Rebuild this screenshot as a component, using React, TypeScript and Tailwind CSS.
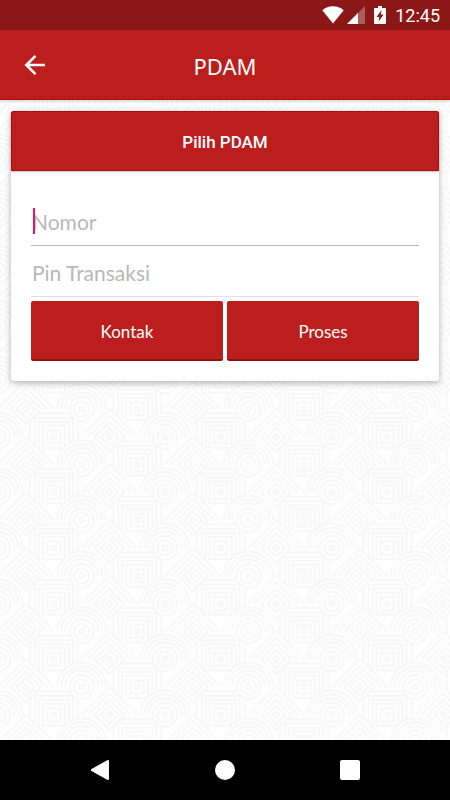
import React from "react";

const PERIOD_X = 166.8;
const PERIOD_Y = 55.6;
const STEP = 27.8;

type Kind = "diamond" | "circle" | "square";
type Motif = { kind: Kind; x: number; y: number; id: string };

const ROWS: Kind[][] = [
  ["diamond", "circle", "square"],
  ["square", "diamond", "circle"],
];

const MOTIFS: Motif[] = [-2, -1, 0, 1, 2, 3].flatMap((row) => {
  const odd = Math.abs(row % 2);
  return [-3, -2, -1, 0, 1, 2, 3, 4].map((slot) => ({
    kind: ROWS[odd][(slot + 3) % 3],
    x: (slot * 2 + odd) * STEP,
    y: row * STEP,
    id: `${row}:${slot}`,
  }));
});

function Outer({ kind, x, y }: Motif) {
  return (
    <g transform={`translate(${x} ${y})`}>
      {kind === "diamond" &&
        [28, 21.5].map((r) => <path key={r} d={`M${-r} 0L0 ${-r}L${r} 0`} />)}
      {kind === "circle" &&
        [24.5, 20.5, 16.5].map((r) => <path key={r} d={`M${-r} 0A${r} ${r} 0 0 1 ${r} 0`} />)}
      {kind === "square" && (
        <>
          <path d="M-24 16V-23.500H24V16" />
          <path d="M-19 16V-19H19V16" />
          <path d="M-15 16V-15H15V16" />
        </>
      )}
    </g>
  );
}

function Inner({ kind, x, y }: Motif) {
  return (
    <g transform={`translate(${x} ${y})`}>
      {kind === "diamond" &&
        [15, 9, 3].map((r) => <path key={r} d={`M0 ${-r}L${r} 0L0 ${r}L${-r} 0Z`} />)}
      {kind === "circle" && [12, 7.5, 2.5].map((r) => <circle key={r} r={r} />)}
      {kind === "square" &&
        [11, 6.5, 2].map((r) => <rect key={r} x={-r} y={-r} width={r * 2} height={r * 2} />)}
    </g>
  );
}

function Backdrop() {
  return (
    <svg className="absolute inset-0 h-full w-full" aria-hidden="true">
      <defs>
        <pattern id="motifs" x="26" y="31" width={PERIOD_X} height={PERIOD_Y} patternUnits="userSpaceOnUse">
          <g fill="#fefefe" stroke="#f6f6f6" strokeWidth="1.600">
            {MOTIFS.map((motif) => (
              <Outer key={motif.id} {...motif} />
            ))}
            {MOTIFS.map((motif) => (
              <Inner key={motif.id} {...motif} />
            ))}
          </g>
        </pattern>
      </defs>
      <rect width="100%" height="100%" fill="url(#motifs)" />
    </svg>
  );
}

function StatusBar() {
  return (
    <div className="flex h-[30px] items-center justify-end bg-[#8c1717] pr-[10px] text-white">
      <svg width="22" height="18" viewBox="0 0 22 18" fill="currentColor" aria-hidden="true">
        <path d="M11 17.5L.3 4.2C3.200 1.600 7 .2 11 .2s7.800 1.400 10.700 4z" />
      </svg>
      <svg className="ml-[3px]" width="18" height="18" viewBox="0 0 18 18" fill="currentColor" aria-hidden="true">
        <path d="M0 18L18 0v18z" opacity=".3" />
        <path d="M0 18L11 7v11z" />
      </svg>
      <svg className="ml-[9px]" width="12" height="18" viewBox="0 0 12 18" aria-hidden="true">
        <path d="M4 0h4v2h3q1 0 1 1v14q0 1-1 1H1q-1 0-1-1V3q0-1 1-1h3z" fill="#fff" />
        <path d="M7.500 4L2.500 11h2.700L4.700 15.500 9.500 8.500H6.800z" fill="#8c1717" />
      </svg>
      <time className="ml-[9px] pt-px font-['Roboto',sans-serif] text-[18px] leading-[30px]">12:45</time>
    </div>
  );
}

const fieldClass =
  "block h-[51px] w-full border-b bg-transparent px-px pt-[2px] text-[21px] leading-[28px] text-[#444] caret-transparent outline-none placeholder:text-[#b8b8b8] placeholder:opacity-100";

const buttonClass =
  "h-[60px] flex-1 rounded-[2px] border-b-2 border-[#8e1010] bg-[#bb1e1c] pt-[4px] text-[17px] leading-[24px] text-white";

export default function App() {
  return (
    <div className="flex min-h-screen flex-col bg-[#fefefe] font-['Lato',sans-serif]">
      <StatusBar />
      <header className="relative z-10 grid h-[70px] grid-cols-[70px_1fr_70px] items-center border-b border-[#b10b0b] bg-[#bb1e1c] text-white shadow-[0_1px_3px_rgba(0,0,0,0.2)]">
        <button type="button" aria-label="Kembali" className="flex h-full items-center justify-center">
          <svg width="22" height="22" viewBox="0 0 22 22" fill="none" stroke="currentColor" strokeWidth="2.600" aria-hidden="true">
            <path d="M21 11H2.500M11.500 1.800L2.300 11l9.200 9.200" />
          </svg>
        </button>
        <h1 className="pt-[3px] text-center font-['Noto_Sans',sans-serif] text-[22px] leading-[30px]">PDAM</h1>
      </header>

      <main className="relative flex-1 px-[11px] pt-[11px]">
        <Backdrop />
        <section className="relative rounded-[3px] bg-white shadow-[0_2px_6px_rgba(0,0,0,0.3)]">
          <button
            type="button"
            className="block h-[60px] w-full rounded-t-[2px] border border-[#b10b0b] bg-[#bb1e1c] pt-[2px] font-['Roboto',sans-serif] text-[17px] font-medium leading-[24px] text-white shadow-[0_1px_2px_rgba(0,0,0,0.25)]"
          >
            Pilih PDAM
          </button>
          <form className="px-5 pb-5 pt-6" onSubmit={(event) => event.preventDefault()}>
            <div className="relative">
              <input aria-label="Nomor" placeholder="Nomor" inputMode="numeric" className={`${fieldClass} border-[#c9b0b0]`} />
              <span className="absolute bottom-3 left-[2px] h-[26px] w-[2px] bg-[#f50f6c]" />
            </div>
            <input
              aria-label="Pin Transaksi"
              placeholder="Pin Transaksi"
              type="password"
              className={`${fieldClass} border-[#dedede]`}
            />
            <div className="mt-1 flex gap-1">
              <button type="button" className={buttonClass}>
                Kontak
              </button>
              <button type="submit" className={buttonClass}>
                Proses
              </button>
            </div>
          </form>
        </section>
      </main>

      <nav className="relative grid h-[60px] grid-cols-[1fr_100px_50px_100px_1fr] items-center bg-black text-white">
        <button type="button" aria-label="Back" className="col-start-2 ml-[-25px] flex h-full w-[50px] items-center justify-center">
          <svg width="20" height="20" viewBox="0 0 20 20" fill="currentColor" aria-hidden="true">
            <path d="M17.200.3Q19 -.5 19 1.200v17.600Q19 20.500 17.200 19.700L1.500 11Q.3 10 1.500 9z" />
          </svg>
        </button>
        <button type="button" aria-label="Home" className="flex h-full items-center justify-center">
          <span className="size-5 rounded-full bg-white" />
        </button>
        <button type="button" aria-label="Recent apps" className="mr-[-25px] flex h-full w-[50px] items-center justify-center justify-self-end">
          <span className="size-5 rounded-[2px] bg-white" />
        </button>
      </nav>
    </div>
  );
}
